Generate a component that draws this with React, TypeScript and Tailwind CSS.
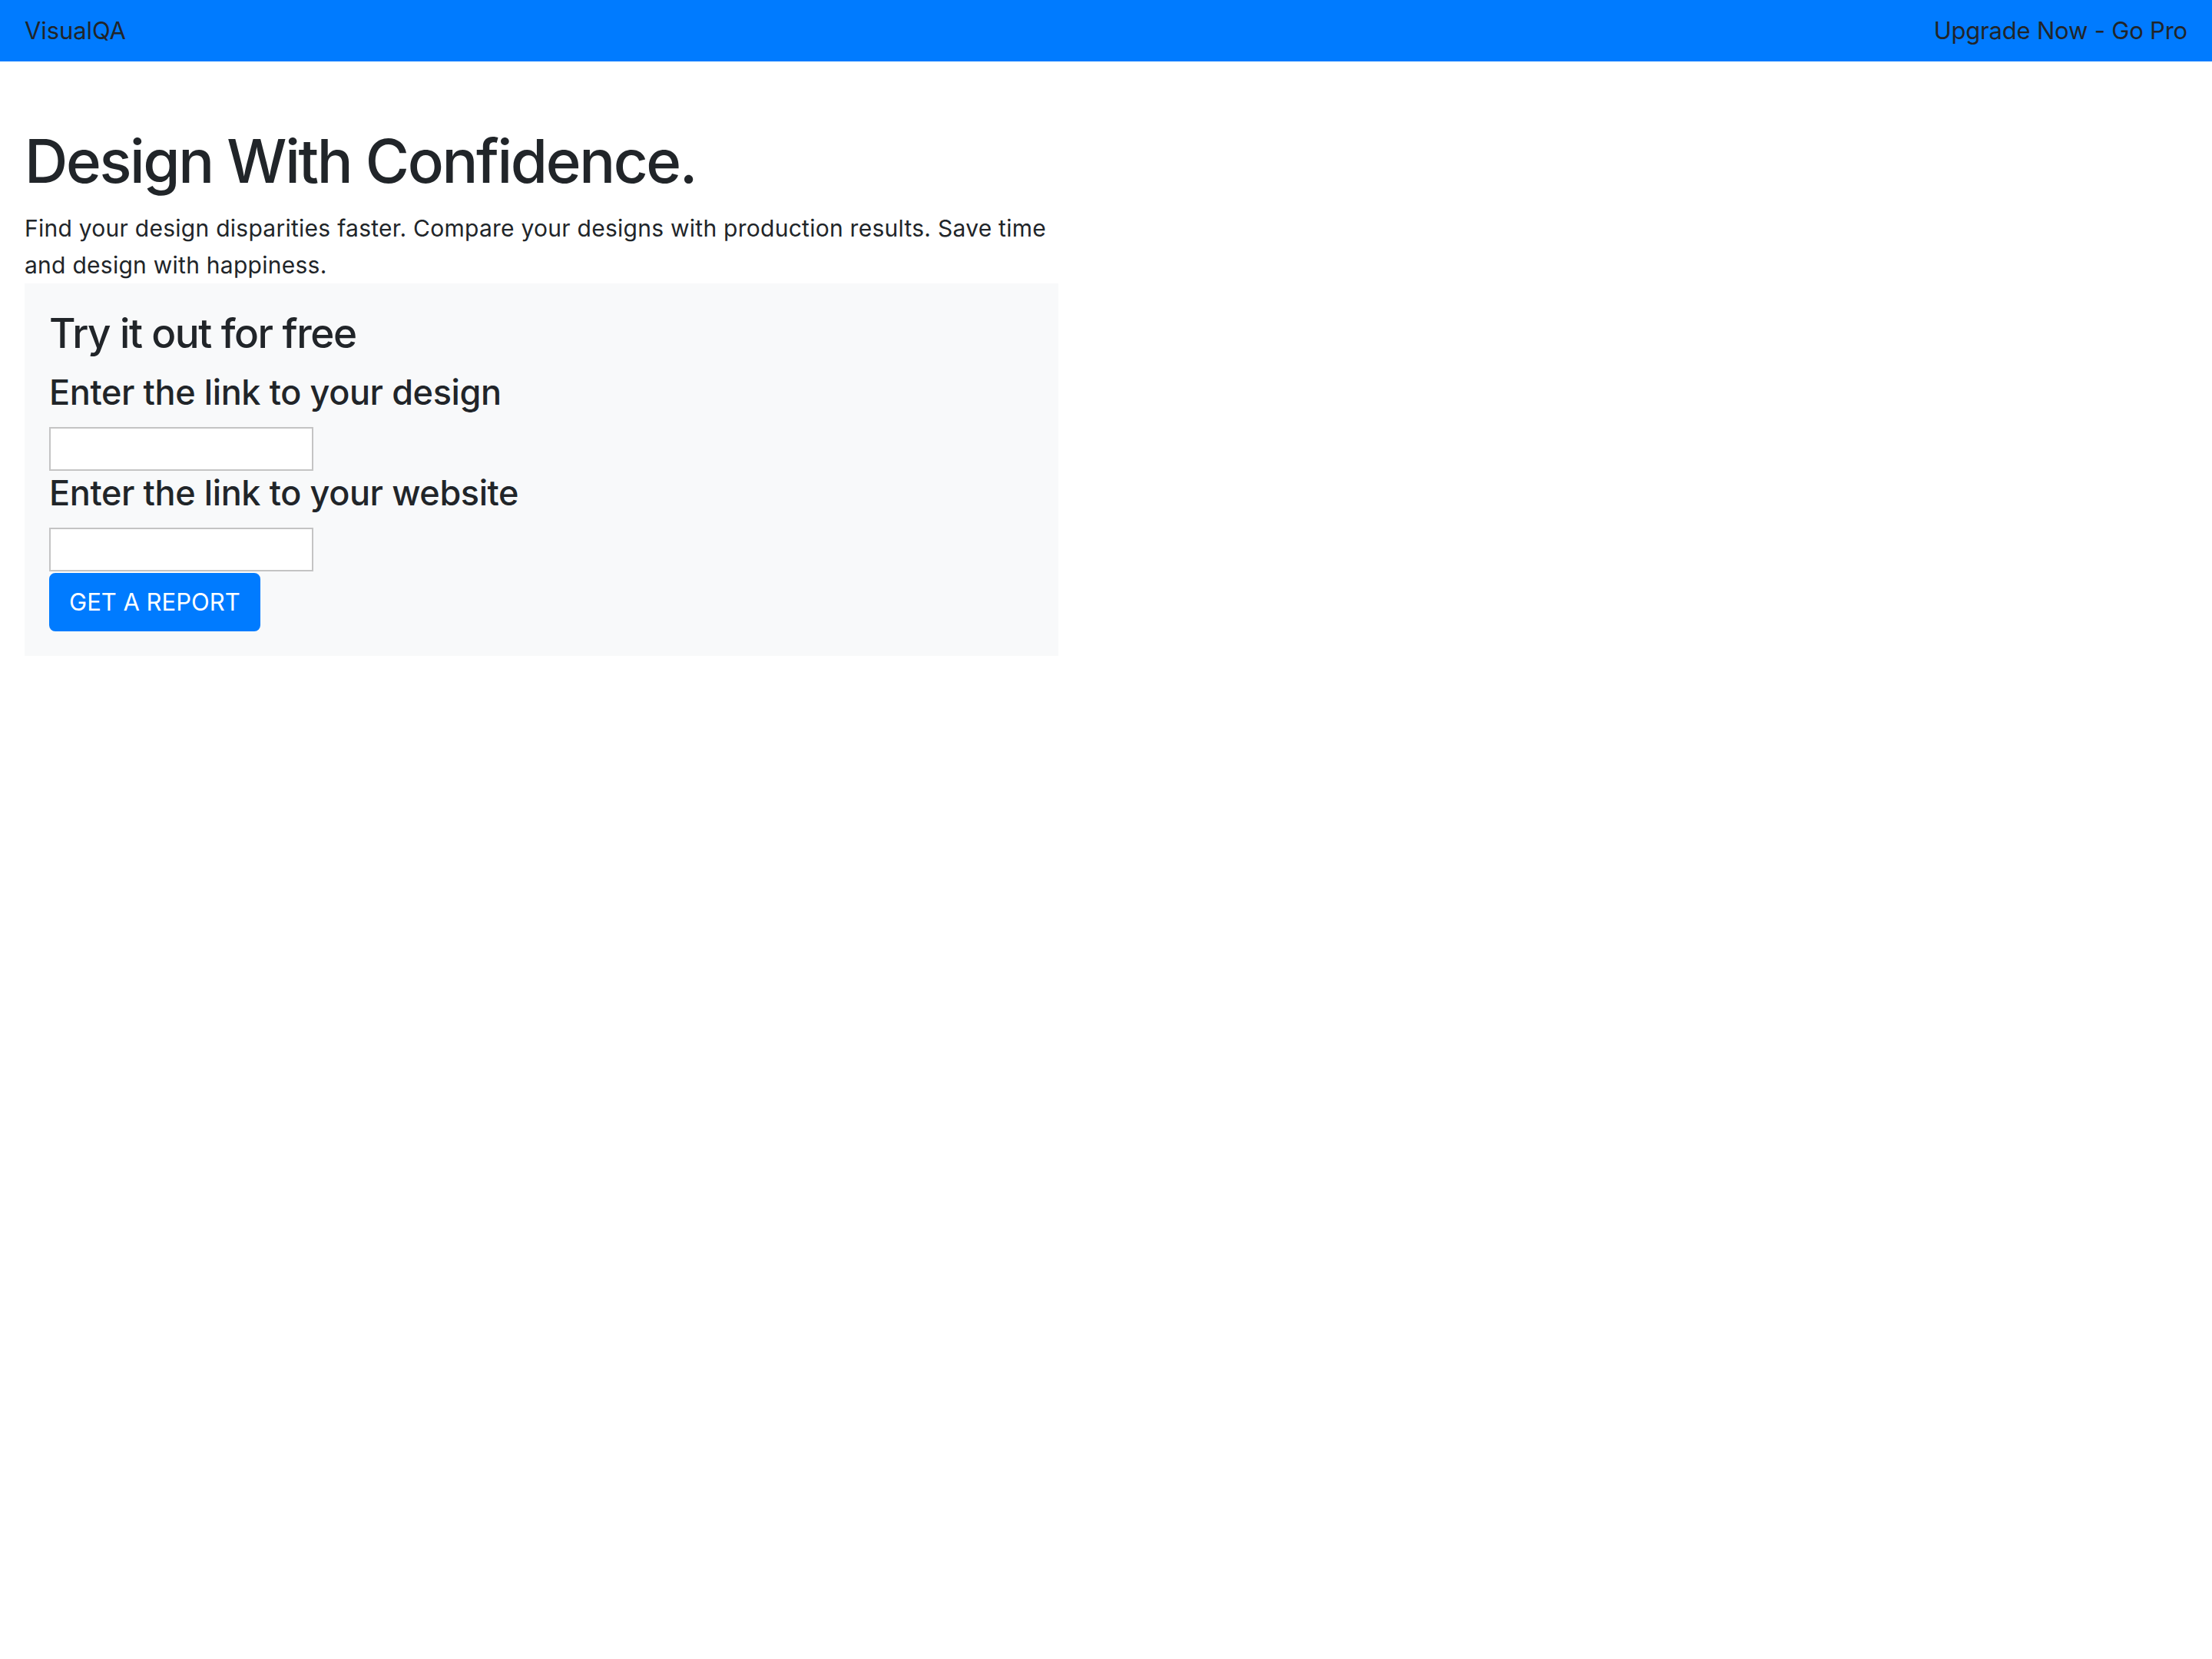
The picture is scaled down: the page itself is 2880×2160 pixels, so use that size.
const App = () => {
  return (
    <div className="min-h-screen w-full bg-white font-['Inter',_'Liberation_Sans',_sans-serif] text-[#212529]">
      <nav className="flex h-[80px] w-full items-center justify-between bg-[#007bff] px-[32px]">
        <a className="text-[31px] leading-[48px] tracking-[-0.1px] text-[#212529]">VisualQA</a>
        <a className="text-[31px] leading-[48px] tracking-[-0.2px] text-[#212529]">Upgrade Now - Go Pro</a>
      </nav>

      <main className="w-[1410px] px-[32px]">
        <h1 className="mt-[82px] mb-[15px] text-[78px] font-medium leading-[96px] tracking-[-2.35px]">
          Design With Confidence.
        </h1>
        <p className="text-[30px] leading-[48px] tracking-[0.26px]">
          Find your design disparities faster. Compare your designs with production results. Save time and design with
          happiness.
        </p>

        <section className="flex flex-col items-start bg-[#f8f9fa] p-[32px]">
          <h3 className="mb-[14px] text-[53px] font-medium leading-[67px] tracking-[-1.4px]">Try it out for free</h3>
          <h4 className="mb-[16px] text-[45px] font-medium leading-[58px] tracking-[-0.4px]">
            Enter the link to your design
          </h4>
          <input
            type="text"
            className="h-[57px] w-[344px] border-2 border-[#c4c4c4] bg-white px-[12px] text-[28px] outline-none"
          />
          <h4 className="mb-[16px] text-[45px] font-medium leading-[58px] tracking-[-0.4px]">
            Enter the link to your website
          </h4>
          <input
            type="text"
            className="h-[57px] w-[344px] border-2 border-[#c4c4c4] bg-white px-[12px] text-[28px] outline-none"
          />
          <button className="mt-[2px] rounded-[8px] border-2 border-[#007bff] bg-[#007bff] px-[24px] py-[12px] text-[31px] leading-[48px] text-white">
            GET A REPORT
          </button>
        </section>
      </main>
    </div>
  );
};

export default App;
